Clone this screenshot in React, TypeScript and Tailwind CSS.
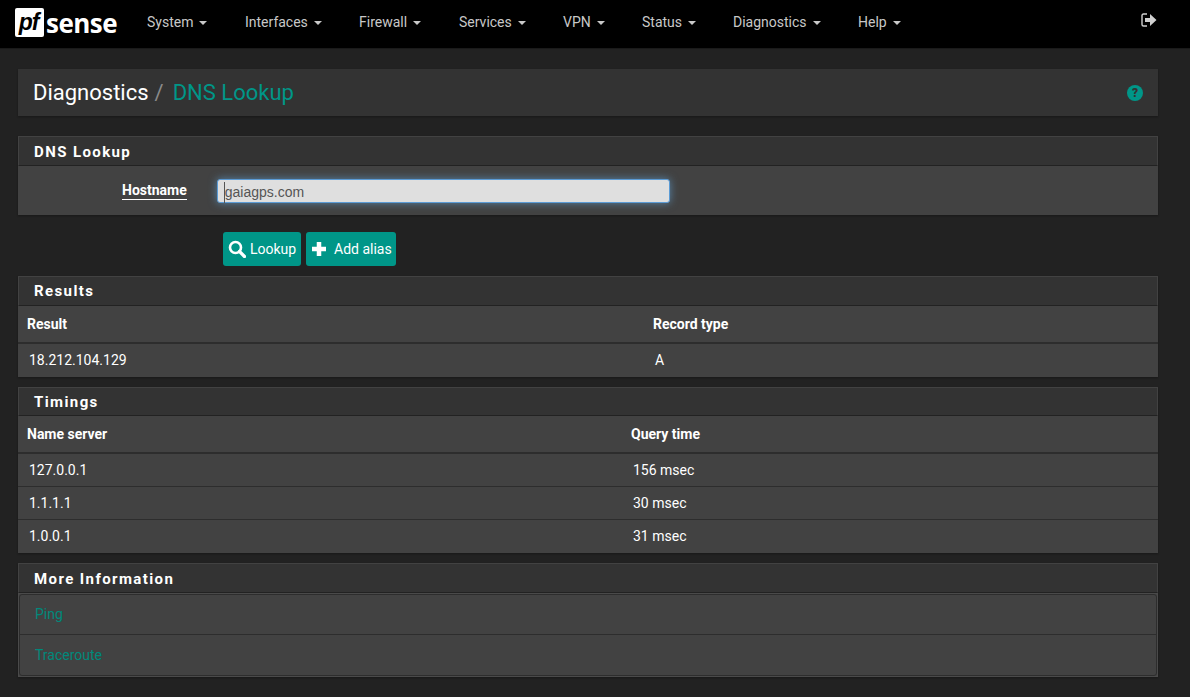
import type { ReactNode } from 'react'

const menu: [string, string][] = [
  ['System', 'w-[98px]'],
  ['Interfaces', 'w-[114px]'],
  ['Firewall', 'w-[100px]'],
  ['Services', 'w-[104px]'],
  ['VPN', 'w-[79px]'],
  ['Status', 'w-[91px]'],
  ['Diagnostics', 'w-[125px]'],
  ['Help', 'w-[90px]'],
]

function Panel({ title, slim, low, children }: { title: string; slim?: boolean; low?: boolean; children: ReactNode }) {
  return (
    <section className="bg-[#424242] shadow-[0_1px_2px_rgba(0,0,0,0.3)]">
      <h2
        className={`flex items-center border border-[#424242] border-b-[#222] bg-[#333] pl-[15px] text-[15px] font-bold tracking-[1.4px] text-white ${slim ? 'h-[29px]' : 'h-[30px]'} ${low ? 'pt-[2px]' : ''}`}
      >
        {title}
      </h2>
      {children}
    </section>
  )
}

function Row({ cols, head, up, split }: { cols: [string, string]; head?: boolean; up?: boolean; split: string }) {
  return (
    <div
      className={
        head
          ? 'flex h-[38px] items-center border-b-2 border-[#2d2d2d] pl-[9px] text-[14px] font-bold text-white'
          : `flex h-[33px] items-center border-b border-[#2d2d2d] pl-[11px] text-[14px] text-white last:border-b-0 ${up ? 'pb-[1px]' : ''}`
      }
    >
      <div className={split}>{cols[0]}</div>
      <div>{cols[1]}</div>
    </div>
  )
}

export default function App() {
  return (
    <div className="min-h-[697px] bg-[#222] font-['Roboto',sans-serif]">
      <nav className="flex h-[49px] items-center border-b border-[#1a1a1a] bg-black pb-[3px]">
        <div className="ml-[15px] flex w-[117px] items-center">
          <span className="flex h-[29px] w-[29px] items-center justify-center rounded-[2px] bg-white pr-[2px] font-['Liberation_Sans',sans-serif] text-[23px] font-bold italic leading-none tracking-[-1px] text-black">
            pf
          </span>
          <span className="ml-[2px] font-['Open_Sans',sans-serif] text-[26px] font-bold leading-none tracking-[-0.5px] text-white">
            sense
          </span>
        </div>
        <ul className="ml-[15px] flex text-[14px] text-[#c8c8c8]">
          {menu.map(([name, width]) => (
            <li key={name} className={`flex items-center ${width}`}>
              {name}
              <span className="ml-[6px] h-0 w-0 border-x-[4px] border-t-[4px] border-x-transparent border-t-[#c8c8c8]" />
            </li>
          ))}
        </ul>
        <svg viewBox="0 0 16 14" className="ml-auto mb-[6px] mr-[33px] h-[14px] w-[16px] text-[#d0d0d0]">
          <path d="M6 1H2.5C1.6 1 1 1.6 1 2.5v9c0 .9.6 1.5 1.5 1.5H6" fill="none" stroke="currentColor" strokeWidth="1.4" />
          <path d="M4 5h5V1l6.5 6L9 13V9H4z" fill="currentColor" />
        </svg>
      </nav>

      <main className="flex flex-col pl-[18px] pr-[32px] pt-[20px]">
        <header className="flex h-[47px] items-center justify-between bg-[#333] px-[15px] shadow-[0_1px_2px_rgba(0,0,0,0.3)]">
          <h1 className="text-[22px] leading-none text-white">
            Diagnostics
            <span className="ml-[6px] text-[#8a8a8a]">/</span>
            <span className="ml-[9px] text-[#009688]">DNS Lookup</span>
          </h1>
          <span className="flex h-4 w-4 items-center justify-center rounded-full bg-[#009688] text-[12px] font-black leading-none text-[#333]">
            ?
          </span>
        </header>

        <div className="mt-[20px]">
          <Panel title="DNS Lookup" low>
            <div className="flex h-[49px] items-center">
              <span className="ml-[104px] border-b border-white text-[14px] font-bold leading-[17px] text-white">
                Hostname
              </span>
              <div className="ml-[30px] flex h-[24px] w-[453px] items-center rounded-[3px] border border-[#5b9bd5] bg-[#dfdfdf] pl-[6px] pt-[3px] font-['Liberation_Sans',sans-serif] text-[14px] text-[#555] shadow-[0_0_8px_rgba(102,175,233,0.6)]">
                <span className="border-l border-[#555]">gaiagps.com</span>
              </div>
            </div>
          </Panel>
        </div>

        <div className="ml-[205px] mt-[17px] flex gap-[5px] text-[14px] text-white">
          <button className="flex h-[34px] w-[78px] items-center rounded-[3px] bg-[#009688] pl-[5px]">
            <svg viewBox="0 0 18 18" className="h-[18px] w-[18px]">
              <circle cx="7.5" cy="7.5" r="5.5" fill="none" stroke="currentColor" strokeWidth="2.6" />
              <path d="M11.5 11.5L16.5 16.5" stroke="currentColor" strokeWidth="3.2" strokeLinecap="round" />
            </svg>
            <span className="ml-[4px]">Lookup</span>
          </button>
          <button className="flex h-[34px] w-[90px] items-center rounded-[3px] bg-[#009688] pl-[5px]">
            <svg viewBox="0 0 16 16" className="h-[16px] w-[16px]">
              <path d="M5.75 1h4.5v4.75H15v4.5h-4.75V15h-4.5v-4.75H1v-4.5h4.75z" fill="currentColor" />
            </svg>
            <span className="ml-[7px]">Add alias</span>
          </button>
        </div>

        <div className="mt-[10px]">
          <Panel title="Results">
            <Row head split="w-[626px]" cols={['Result', 'Record type']} />
            <Row up split="w-[626px]" cols={['18.212.104.129', 'A']} />
          </Panel>
        </div>

        <div className="mt-[10px]">
          <Panel title="Timings" slim low>
            <Row head split="w-[604px]" cols={['Name server', 'Query time']} />
            <Row split="w-[604px]" cols={['127.0.0.1', '156 msec']} />
            <Row split="w-[604px]" cols={['1.1.1.1', '30 msec']} />
            <Row split="w-[604px]" cols={['1.0.0.1', '31 msec']} />
          </Panel>
        </div>

        <div className="mt-[10px]">
          <Panel title="More Information" low>
            <div className="border border-[#4a4a4a]">
              <ul className="rounded-[3px] border border-[#2d2d2d] text-[14px] text-[#00897b]">
                <li className="flex h-[40px] items-center border-b border-[#2d2d2d] pl-[15px]">Ping</li>
                <li className="flex h-[40px] items-center pl-[15px]">Traceroute</li>
              </ul>
            </div>
          </Panel>
        </div>
      </main>
    </div>
  )
}
